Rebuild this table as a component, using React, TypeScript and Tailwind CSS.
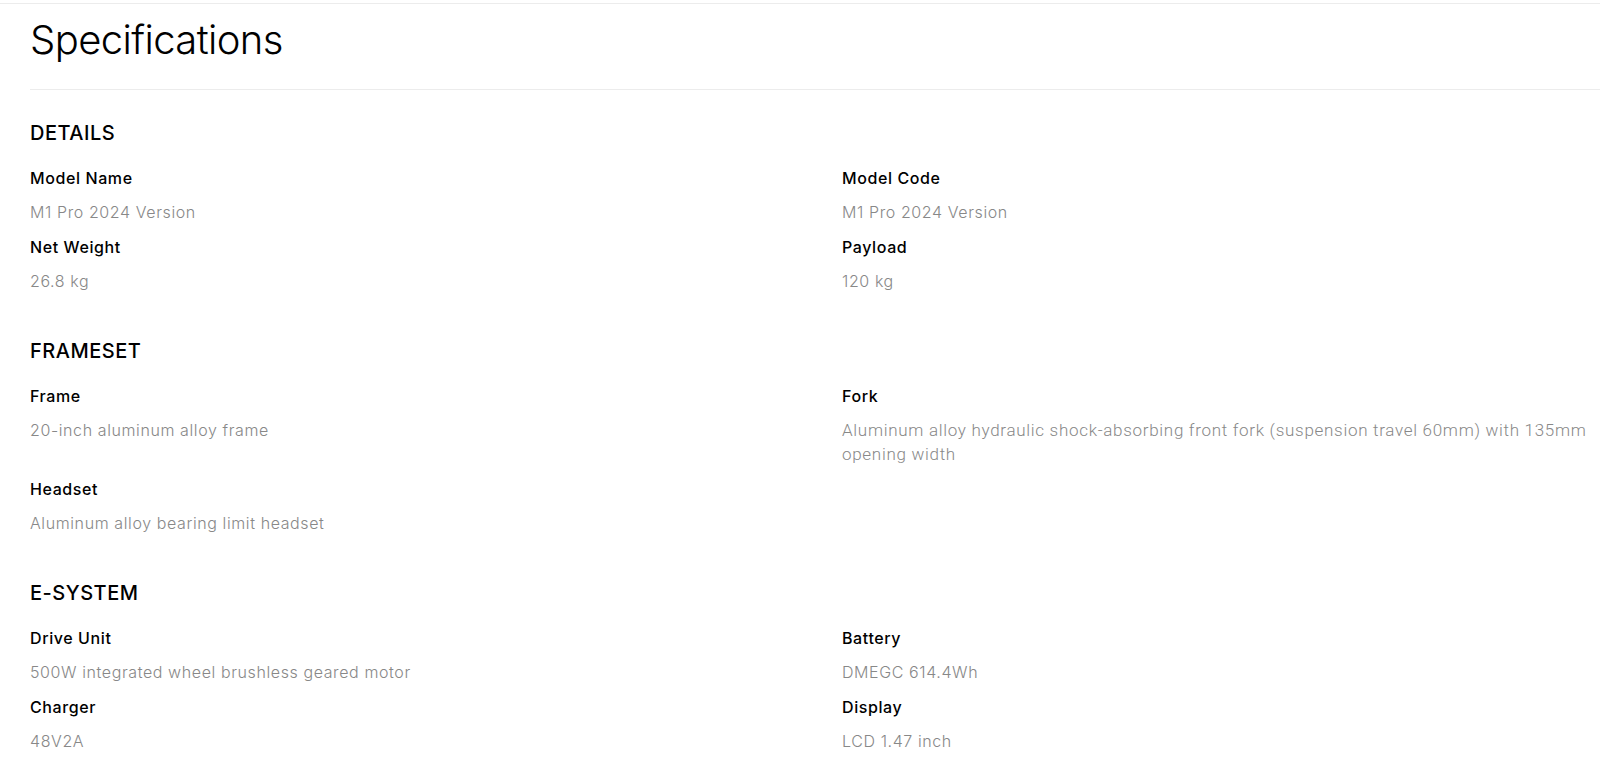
import React from "react";

type Item = { label: string; value: string; alt?: boolean };

const sections: { title: string; items: Item[] }[] = [
  {
    title: "DETAILS",
    items: [
      { label: "Model Name", value: "M1 Pro 2024 Version" },
      { label: "Model Code", value: "M1 Pro 2024 Version" },
      { label: "Net Weight", value: "26.8 kg" },
      { label: "Payload", value: "120 kg" },
    ],
  },
  {
    title: "FRAMESET",
    items: [
      { label: "Frame", value: "20-inch aluminum alloy frame" },
      {
        label: "Fork",
        value:
          "Aluminum alloy hydraulic shock-absorbing front fork (suspension travel 60mm) with 135mm opening width",
        alt: true,
      },
      { label: "Headset", value: "Aluminum alloy bearing limit headset" },
    ],
  },
  {
    title: "E-SYSTEM",
    items: [
      { label: "Drive Unit", value: "500W integrated wheel brushless geared motor" },
      { label: "Battery", value: "DMEGC 614.4Wh" },
      { label: "Charger", value: "48V2A" },
      { label: "Display", value: "LCD 1.47 inch" },
    ],
  },
];

export default function App() {
  return (
    <div className="min-h-screen bg-white font-['Inter',sans-serif] text-black">
      <div className="mt-[3px] border-t border-[#ececec]" />
      <div className="pl-[30px]">
        {/* Title */}
        <h1 className="border-b border-[#ececec] pt-3 pb-[25px] text-[40px] font-light leading-[48px] tracking-[-0.6px]">
          Specifications
        </h1>

        {sections.map((s, i) => (
          <section key={s.title} className={i === 0 ? "pt-[29px]" : "pt-[44px]"}>
            <h2 className="text-[20px] font-medium leading-[28px] tracking-[0.5px]">{s.title}</h2>
            <div className="mt-[19px] grid grid-cols-2 gap-x-[54px] gap-y-[11px]">
              {s.items.map((it) => (
                <div key={it.label} className="flex flex-col gap-[10px]">
                  <div className="text-[16px] font-medium leading-[24px] tracking-[0.6px]">
                    {it.label}
                  </div>
                  <div
                    className={
                      it.alt
                        ? "font-['Roboto',sans-serif] text-[17px] font-light leading-[24px] tracking-[0.7px] text-[#888888]"
                        : "text-[16px] font-light leading-[24px] tracking-[0.6px] text-[#888888]"
                    }
                  >
                    {it.value}
                  </div>
                </div>
              ))}
            </div>
          </section>
        ))}
      </div>
    </div>
  );
}
